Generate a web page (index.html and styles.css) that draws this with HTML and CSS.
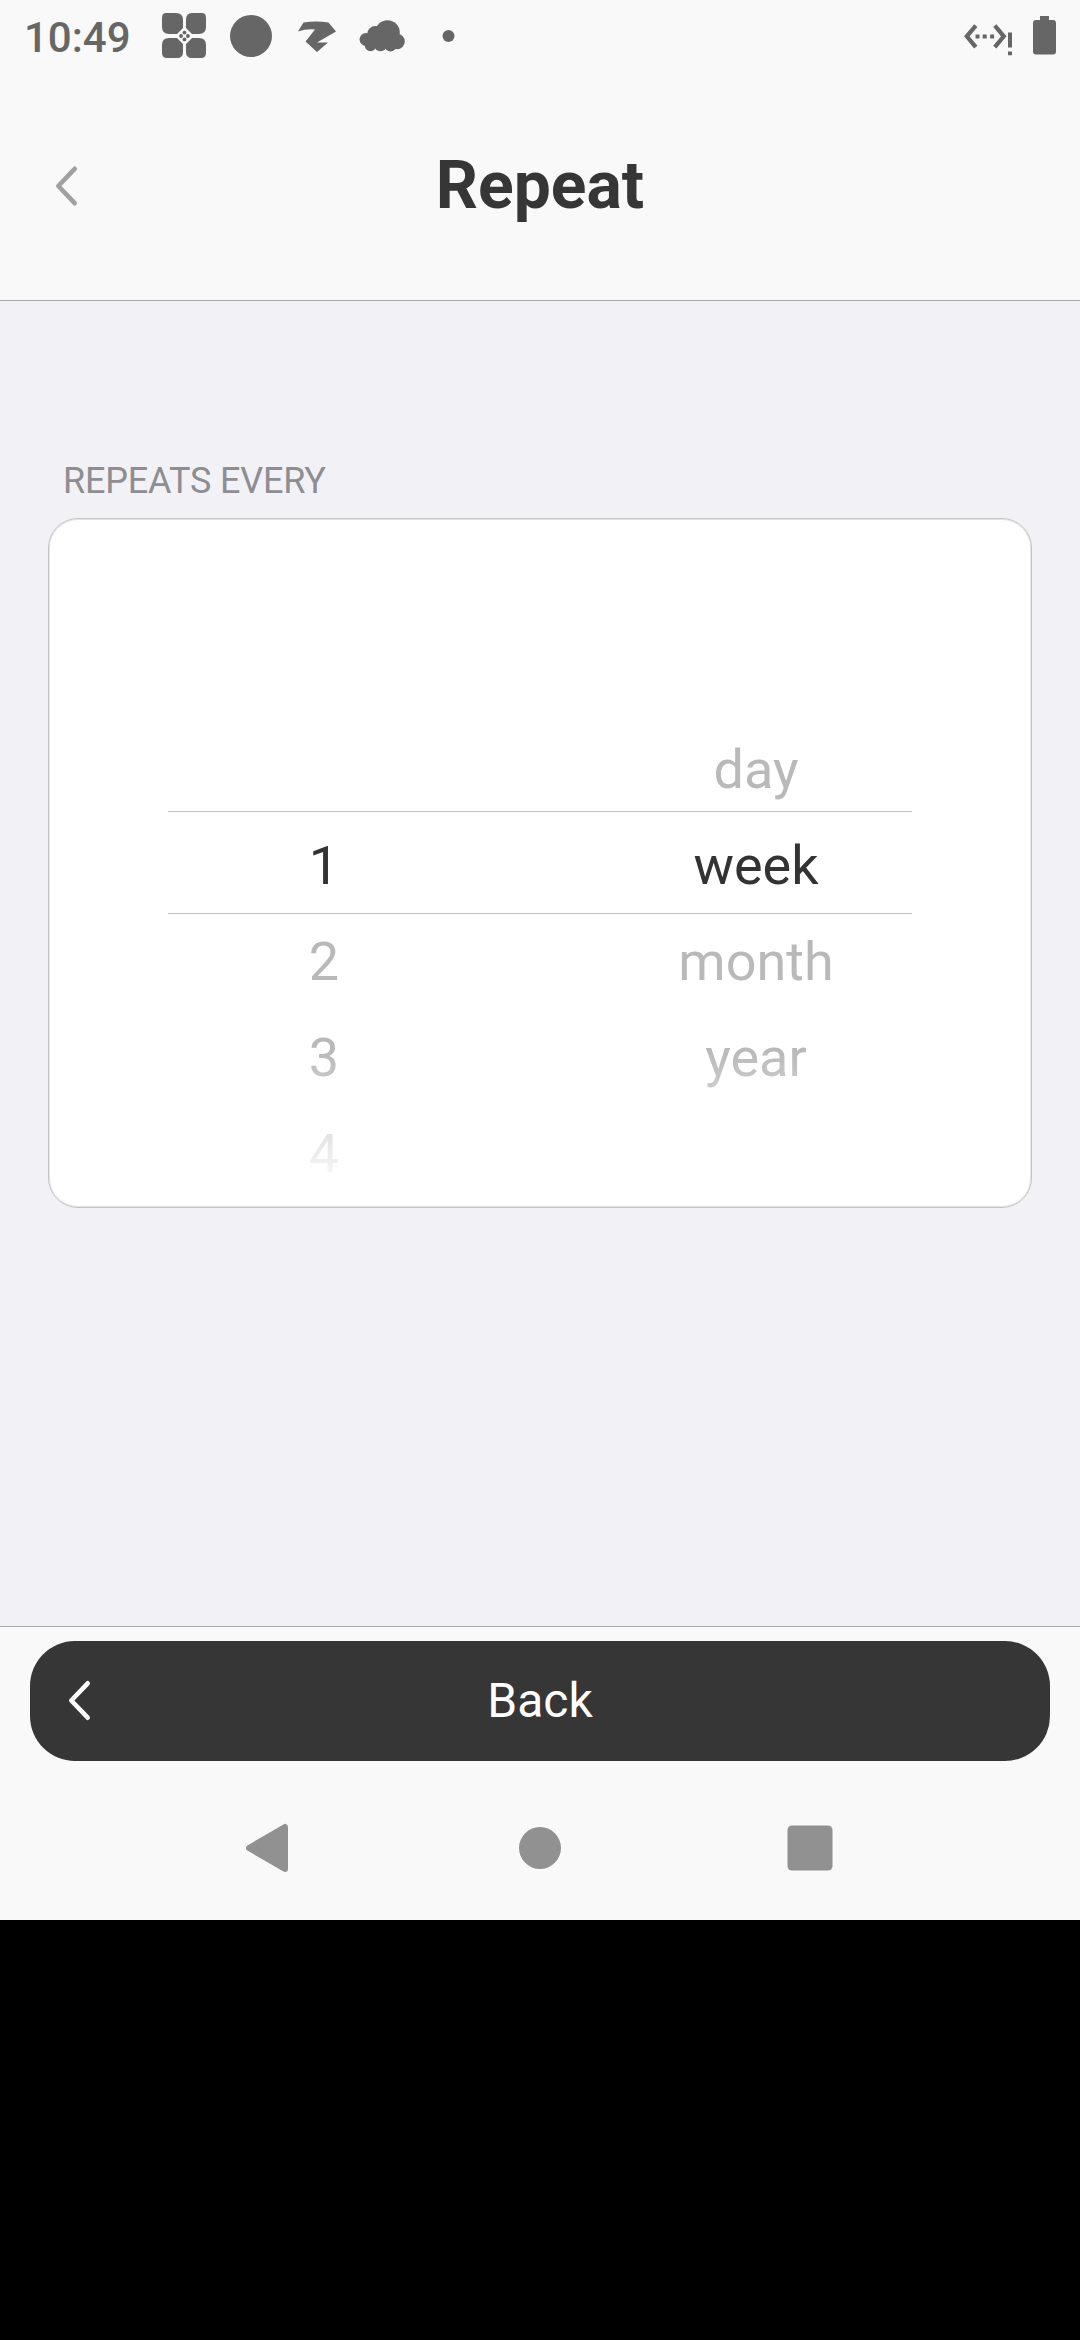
FILE: index.html
```html
<!DOCTYPE html>
<html lang="en">
<head>
<meta charset="utf-8">
<title>Repeat</title>
<link rel="stylesheet" href="styles.css">
</head>
<body>
<div class="screen">
  <div class="status-bar">
    <span class="clock">10:49</span>
    <div class="notifications">
      <svg class="note-icon" viewBox="0 0 66 72">
        <path d="M17 13h10q7 0 7 7v8l-6 6h-8q-7 0-7-7V18q0-5 4-5zM43 13h10q4 0 4 5v9q0 7-7 7h-7l-6-6v-8q0-7 6-7zM20 38h8l6 6v8q0 6-6 6H18q-5 0-5-5v-8q0-7 7-7zM43 38h7q7 0 7 7v8q0 5-5 5H43q-6 0-6-6v-8z"/>
        <path class="knockout" d="M35.500 29l7 7-7 7-7-7z"/>
        <circle cx="35.500" cy="32.600" r="1.900"/><circle cx="35.500" cy="39.400" r="1.900"/><circle cx="32.100" cy="36" r="1.900"/><circle cx="38.900" cy="36" r="1.900"/>
      </svg>
      <svg class="note-icon" viewBox="0 0 66 72"><circle cx="36" cy="36" r="21"/></svg>
      <svg class="note-icon" viewBox="0 0 66 72"><path d="M22.500 22.500Q35 20.500 47.500 22.500L55 31.500 36 42.500H47L36 52 24.500 41.500 34 29.500Q26 28.500 17 31.500z"/></svg>
      <svg class="note-icon" viewBox="0 0 66 72"><circle cx="19" cy="39.500" r="6.500"/><circle cx="28.500" cy="34.500" r="8.500"/><circle cx="40.500" cy="32.500" r="12.300"/><circle cx="50" cy="41.500" r="7.800"/><circle cx="23.500" cy="45.500" r="5.700"/><circle cx="33.500" cy="44.500" r="6.700"/><circle cx="43.500" cy="45.500" r="6"/></svg>
      <svg class="note-icon" viewBox="0 0 66 72"><circle cx="35.500" cy="36" r="6"/></svg>
    </div>
    <div class="system">
      <svg class="ethernet" viewBox="0 0 50 72">
        <path class="chevrons" d="M11.800 25.600L2.800 36.300l9 10.800M30.800 25.600l9 10.700-9 10.800"/>
        <path d="M11.500 34.500h4v4h-4zM18.700 34.500h4v4h-4zM26.100 34.500h4v4h-4zM44 32.500h4v15h-4zM44 51.500h4v3.700h-4z"/>
      </svg>
      <svg class="battery" viewBox="0 0 24 72"><path d="M7 16h9v4h4q3 0 3 3v28.500q0 3-3 3H3q-3 0-3-3V23q0-3 3-3h4z"/></svg>
    </div>
  </div>

  <header class="header">
    <svg class="chevron" viewBox="0 0 24 42"><path d="M19.700 3.800L3.300 21l16.400 17.200"/></svg>
    <h1 class="title">Repeat</h1>
  </header>

  <main class="content">
    <h2 class="section-label">REPEATS EVERY</h2>
    <section class="card">
      <div class="wheels">
        <ul class="wheel">
          <li></li><li></li><li></li>
          <li class="selected">1</li><li>2</li><li>3</li><li>4</li>
        </ul>
        <ul class="wheel">
          <li></li><li></li><li>day</li>
          <li class="selected">week</li><li>month</li><li>year</li><li></li>
        </ul>
      </div>
      <div class="selection"></div>
    </section>
  </main>

  <footer class="footer">
    <button class="back">
      <svg class="chevron" viewBox="0 0 24 42"><path d="M19.700 3.300L3.300 20.500l16.400 17.200"/></svg>
      <span>Back</span>
    </button>
  </footer>

  <nav class="nav">
    <svg viewBox="0 0 60 60"><path class="triangle" d="M45 9v42L9 30z"/></svg>
    <svg viewBox="0 0 60 60"><circle cx="30" cy="30" r="21"/></svg>
    <svg viewBox="0 0 60 60"><rect x="7.500" y="7.500" width="45" height="45" rx="4.500"/></svg>
  </nav>
</div>
</body>
</html>
```
FILE: styles.css
```css
* {
  box-sizing: border-box;
}

body {
  margin: 0;
  background: #000;
  font-family: Roboto, sans-serif;
  color: #363636;
}

svg {
  display: block;
  flex: none;
}

.screen {
  display: flex;
  flex-direction: column;
  width: 1080px;
  height: 1920px;
  background: #f9f9f9;
}

.status-bar {
  display: flex;
  align-items: center;
  height: 72px;
  padding: 0 23px 0 24px;
  color: #666;
  fill: #666;
}

.clock {
  width: 125px;
  padding-top: 4px;
  font-size: 42px;
  font-weight: 500;
  line-height: 50px;
}

.notifications {
  display: flex;
}

.note-icon {
  width: 66px;
  height: 72px;
}

.knockout {
  fill: #f9f9f9;
}

.system {
  display: flex;
  gap: 19px;
  margin-left: auto;
}

.ethernet {
  width: 50px;
  height: 72px;
}

.chevrons {
  fill: none;
  stroke: #666;
  stroke-width: 4.2;
}

.battery {
  width: 24px;
  height: 72px;
}

.header {
  display: grid;
  grid-template-columns: 1fr auto 1fr;
  align-content: start;
  align-items: center;
  height: 229px;
  padding: 75px 55px 0;
  border-bottom: 1px solid #a7a7aa;
}

.chevron {
  width: 24px;
  height: 42px;
  fill: none;
  stroke: #a0a0a0;
  stroke-width: 4.6;
  stroke-linecap: round;
  stroke-linejoin: round;
}

.title {
  margin: 0;
  font-size: 66px;
  font-weight: 700;
  line-height: 78px;
}

.content {
  flex: 1;
  padding: 159px 48px 0;
  background: #f2f1f6;
}

.section-label {
  margin: 0;
  padding-left: 15px;
  font-size: 36px;
  font-weight: 400;
  line-height: 42px;
  letter-spacing: -0.2px;
  color: #8e8e92;
}

.card {
  position: relative;
  height: 690px;
  margin-top: 16px;
  border: 1px solid #c4c4c7;
  border-radius: 30px;
  background: #fff;
  box-shadow: inset 0 0 0 1px #e4e4e6;
  overflow: hidden;
}

.wheels {
  display: grid;
  grid-template-columns: 432px 432px;
  justify-content: center;
  padding-top: 11px;
  mask-image: linear-gradient(transparent 14px, #000 156px, #000 531px, transparent 674px);
}

.wheel {
  margin: 0;
  padding: 0;
  list-style: none;
  text-align: center;
  font-size: 54px;
  line-height: 96px;
  color: #b9b9b9;
}

.wheel li {
  height: 96px;
}

.wheel .selected {
  color: #333;
}

/* Band framing the chosen row, drawn over both wheels */
.selection {
  position: absolute;
  top: 292px;
  left: 119px;
  right: 119px;
  height: 103px;
  border: solid #c3c3c3;
  border-width: 1px 0;
}

.footer {
  height: 150px;
  padding: 14px 30px 0;
  border-top: 1px solid #a7a7aa;
}

.back {
  display: grid;
  grid-template-columns: 1fr auto 1fr;
  align-items: center;
  width: 100%;
  height: 120px;
  padding: 0 38px;
  border: 0;
  border-radius: 45px;
  background: #363636;
  color: #fff;
  font: 400 48px/56px Roboto, sans-serif;
}

.back .chevron {
  stroke: #fff;
}

.nav {
  display: flex;
  justify-content: center;
  gap: 210px;
  height: 144px;
  padding-top: 42px;
  fill: #919191;
}

.nav svg {
  width: 60px;
  height: 60px;
}

.triangle {
  stroke: #919191;
  stroke-width: 6;
  stroke-linejoin: round;
}
```
